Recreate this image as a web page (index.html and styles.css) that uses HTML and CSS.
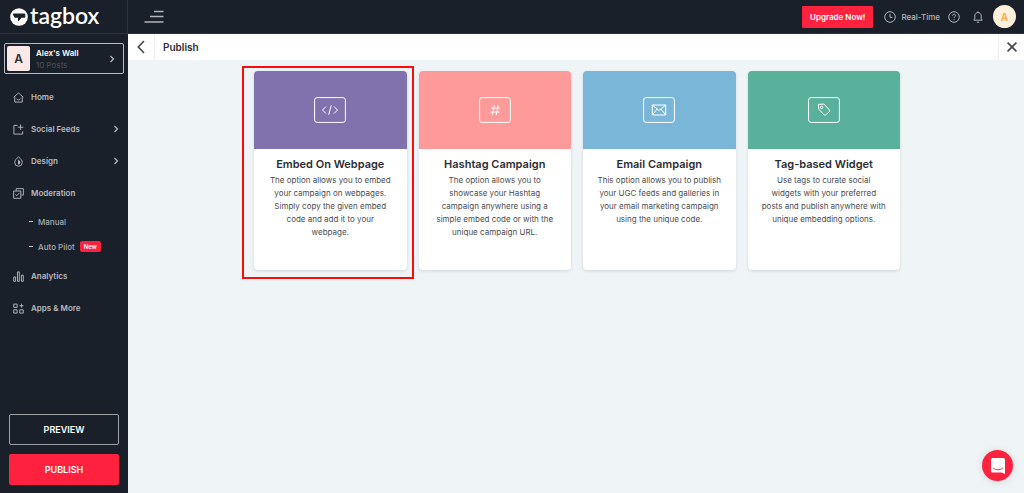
FILE: index.html
```html
<!DOCTYPE html>
<html lang="en">
<head>
<meta charset="utf-8">
<meta name="viewport" content="width=device-width, initial-scale=1">
<title>Publish - tagbox</title>
<link rel="stylesheet" href="styles.css">
</head>
<body>
<div class="app">
  <aside class="sidebar">
    <a class="logo" href="#">
      <svg class="logo-mark" viewBox="0 0 18 18"><circle cx="9" cy="9" r="8.8" fill="#fff"/><path d="M3.200 6h11.600v3.200H11.400l-2.900 3.600V9.200H4.800z" fill="#19202a" stroke="#19202a" stroke-width="1" stroke-linejoin="round"/></svg>
      <span class="logo-text">tagbox</span>
    </a>
    <button class="wall" type="button">
      <span class="wall-badge">A</span>
      <span class="wall-info"><span class="wall-name">Alex's Wall</span><span class="wall-posts">10 Posts</span></span>
      <svg class="chevron" viewBox="0 0 6 8"><path d="M1.500 1 4.500 4 1.500 7"/></svg>
    </button>
    <nav class="menu">
      <a class="menu-item" href="#">
        <svg class="menu-icon" viewBox="0 0 12 12"><path d="M.7 5.700 6 1l5.300 4.700M1.900 4.800v6.200h8.200V4.800M3.800 7.200c1 1.900 3.400 1.900 4.400 0"/></svg>
        <span>Home</span>
      </a>
      <a class="menu-item" href="#">
        <svg class="menu-icon" viewBox="0 0 12 12"><path d="M5 1.500H1v9.500h9.500V8M8.300.5v6M5.300 3.500h6"/></svg>
        <span>Social Feeds</span>
        <svg class="chevron" viewBox="0 0 6 8"><path d="M1.500 1 4.500 4 1.500 7"/></svg>
      </a>
      <a class="menu-item" href="#">
        <svg class="menu-icon" viewBox="0 0 12 12"><path d="M6 .8C3.600 3 1.900 4.800 1.900 7.100a4.100 4.100 0 0 0 8.200 0C10.100 4.800 8.400 3 6 .8z"/><path d="M6 4.500v4.500C8 8.600 8 5.500 6 4.500z" fill="currentColor"/></svg>
        <span>Design</span>
        <svg class="chevron" viewBox="0 0 6 8"><path d="M1.500 1 4.500 4 1.500 7"/></svg>
      </a>
      <a class="menu-item" href="#">
        <svg class="menu-icon" viewBox="0 0 12 12"><path d="M3.500 3V.7h7.800v7H9M.7 3.300h7.800v7.900H.7zM2.700 7l1.400 1.500L7 5.300"/></svg>
        <span>Moderation</span>
      </a>
      <div class="submenu">
        <a class="sub-item" href="#"><span class="dash"></span><span>Manual</span></a>
        <a class="sub-item" href="#"><span class="dash"></span><span>Auto Pilot</span><span class="new">New</span></a>
      </div>
      <a class="menu-item" href="#">
        <svg class="menu-icon" viewBox="0 0 12 12"><path d="M.8 6.500h2v4.700h-2zM4.900 1h2v10.200h-2zM9.200 4.500h2v6.700h-2z"/></svg>
        <span>Analytics</span>
      </a>
      <a class="menu-item" href="#">
        <svg class="menu-icon" viewBox="0 0 12 12"><path d="M.8 1.200h3.700v3.600H.8zM.8 7.400h3.700V11H.8zM7.400 7.400h3.800V11H7.400zM9.300.8v4.400M7.100 3h4.400"/></svg>
        <span>Apps &amp; More</span>
      </a>
    </nav>
    <div class="actions">
      <button class="action preview" type="button">PREVIEW</button>
      <button class="action publish" type="button">PUBLISH</button>
    </div>
  </aside>
  <div class="page">
    <header class="topbar">
      <button class="icon-btn toggle" type="button" aria-label="Toggle menu">
        <svg width="20" height="14" viewBox="0 0 20 14"><path d="M10 1.500h9.500M6 6.500h13.500M.5 12h19" stroke-width="1.600"/></svg>
      </button>
      <button class="upgrade" type="button">Upgrade Now!</button>
      <button class="icon-btn realtime" type="button">
        <svg width="12" height="12" viewBox="0 0 12 12"><circle cx="6" cy="6" r="5.300"/><path d="M6 3v3.400h2.400"/></svg>
        <span>Real-Time</span>
      </button>
      <button class="icon-btn help" type="button" aria-label="Help">
        <svg width="12" height="12" viewBox="0 0 12 12"><circle cx="6" cy="6" r="5.300"/><path d="M4.500 4.700c0-2 3.100-2 3.100-.1C7.600 5.700 6 5.700 6 7.100M6 8.200v1"/></svg>
      </button>
      <button class="icon-btn bell" type="button" aria-label="Notifications">
        <svg width="10" height="12" viewBox="0 0 10 12"><path d="M5 .3v1.200M.8 9.200h8.400L8.200 7.700V5c0-4.600-6.400-4.600-6.400 0v2.700zM3.800 11.200h2.400"/></svg>
      </button>
      <button class="avatar" type="button">A</button>
    </header>
    <div class="titlebar">
      <button class="bar-btn back" type="button" aria-label="Back"><svg width="8" height="14" viewBox="0 0 8 14"><path d="M7 1 1.300 7 7 13"/></svg></button>
      <h1 class="title">Publish</h1>
      <button class="bar-btn close" type="button" aria-label="Close"><svg width="10" height="10" viewBox="0 0 10 10"><path d="m.6.600 8.800 8.800M9.400.600.600 9.400"/></svg></button>
    </div>
    <main class="content">
      <div class="cards">
        <article class="card selected">
          <div class="banner purple"><svg width="32" height="26" viewBox="0 0 32 26"><rect x=".6" y=".6" width="30.800" height="24.800" rx="2.500"/><path d="M12 9.500 8.500 13l3.500 3.500M20 9.500l3.500 3.500-3.500 3.500M17.300 8.300l-2.600 9.400"/></svg></div>
          <h2 class="card-title">Embed On Webpage</h2>
          <p class="card-text">The option allows you to embed your campaign on webpages. Simply copy the given embed code and add it to your<br>webpage.</p>
        </article>
        <article class="card">
          <div class="banner pink"><svg width="32" height="26" viewBox="0 0 32 26"><rect x=".6" y=".6" width="30.800" height="24.800" rx="2.500"/><path d="m15.300 8-2 10M19.200 8l-2 10M12 11h9M11.400 15h9"/></svg></div>
          <h2 class="card-title">Hashtag Campaign</h2>
          <p class="card-text">The option allows you to showcase your Hashtag campaign anywhere using a simple embed code or with the unique campaign URL.</p>
        </article>
        <article class="card">
          <div class="banner blue"><svg width="32" height="26" viewBox="0 0 32 26"><rect x=".6" y=".6" width="30.800" height="24.800" rx="2.500"/><path d="M9.300 8h13.400v10H9.300zM9.300 8l6.700 5.500L22.700 8M9.300 18l4.800-6M22.700 18l-4.800-6"/></svg></div>
          <h2 class="card-title">Email Campaign</h2>
          <p class="card-text">This option allows you to publish your UGC feeds and galleries in your email marketing campaign using the unique code.</p>
        </article>
        <article class="card">
          <div class="banner green"><svg width="32" height="26" viewBox="0 0 32 26"><rect x=".6" y=".6" width="30.800" height="24.800" rx="2.500"/><path d="M10.400 7.400 16 7l5.500 6.200c.4.500.4.900 0 1.300l-4 3.500c-.5.400-.9.400-1.300 0l-5.400-5.800z"/><circle cx="13.600" cy="10.400" r="1.200"/></svg></div>
          <h2 class="card-title">Tag-based Widget</h2>
          <p class="card-text">Use tags to curate social<br>widgets with your preferred<br>posts and publish anywhere with unique embedding options.</p>
        </article>
      </div>
    </main>
  </div>
</div>
<button class="chat" type="button" aria-label="Open chat"><svg width="14" height="16" viewBox="0 0 14 16"><path d="M1.500 0h11A1.500 1.500 0 0 1 14 1.500V16l-3.500-1.500h-9A1.500 1.500 0 0 1 0 13V1.500A1.500 1.500 0 0 1 1.500 0z" fill="#fff"/><path d="M2.500 10.300c2.500 2 6.500 2 9 0" fill="none" stroke="#ff223e" stroke-linecap="round"/></svg></button>
</body>
</html>
```
FILE: styles.css
```css
* { box-sizing: border-box; }

body {
  margin: 0;
  font-family: Inter, "Liberation Sans", sans-serif;
  font-size: 8px;
  color: #2b2d33;
}

button {
  margin: 0;
  padding: 0;
  border: 0;
  background: none;
  font: inherit;
  color: inherit;
  cursor: pointer;
}

a { color: inherit; text-decoration: none; }

svg { display: block; flex: none; fill: none; stroke: currentColor; }
.logo-mark, .chat svg { stroke: none; }

.app {
  display: grid;
  grid-template-columns: 128px 1fr;
  min-height: 100vh;
}

/* Sidebar */
.sidebar {
  display: flex;
  flex-direction: column;
  background: #19202a;
  color: #b9bbbf;
}

.logo {
  display: flex;
  align-items: center;
  gap: 2px;
  height: 34px;
  padding-left: 10px;
  border-bottom: 1px solid #2c333c;
  border-right: 1px solid #2c333c;
}

.logo-mark { width: 18px; height: 18px; }

.logo-text {
  padding-bottom: 4px;
  font: 600 23px/28px Lato, sans-serif;
  color: #fff;
}

.wall {
  display: flex;
  align-items: center;
  gap: 6px;
  height: 31px;
  margin: 9px 4px 0;
  padding: 0 8px 0 2px;
  border: 1px solid #b9bcc0;
  border-radius: 2px;
  text-align: left;
}

.wall-badge {
  width: 23px;
  border-radius: 2px;
  background: #fde8e8;
  color: #2b2d33;
  font-size: 12px;
  font-weight: 600;
  line-height: 25px;
  text-align: center;
}

.wall-info { display: flex; flex: 1; flex-direction: column; line-height: 12px; }
.wall-name { color: #fff; font-weight: 600; }
.wall-posts { color: #50505a; }

.chevron { width: 6px; height: 8px; stroke-width: 1.2; }

.menu {
  display: flex;
  flex-direction: column;
  padding-top: 7px;
}

.menu-item {
  display: flex;
  align-items: center;
  gap: 7px;
  height: 32px;
  padding: 0 9px 0 13px;
  font-weight: 600;
}

.menu-item .chevron { margin-left: auto; }
.menu-icon { width: 11px; height: 11px; stroke-width: 1; }

.submenu { padding-bottom: 1px; }

.sub-item {
  display: flex;
  align-items: center;
  gap: 5px;
  height: 25px;
  padding-left: 29px;
  font-weight: 500;
  color: #a9acb1;
}

.dash { width: 4px; height: 1px; background: #c5c7ca; }

.new {
  padding: 0 4px;
  border-radius: 2px;
  background: #ff223e;
  color: #fff;
  font-size: 6px;
  font-weight: 600;
  line-height: 11px;
}

.actions {
  display: flex;
  flex-direction: column;
  gap: 9px;
  margin-top: auto;
  padding: 0 9px 8px;
}

.action {
  height: 31px;
  border-radius: 2px;
  color: #fff;
  font-size: 9px;
  font-weight: 600;
}

.preview { border: 1px solid #9da0a5; }
.publish { background: #ff223e; }

/* Main column */
.page {
  display: flex;
  flex-direction: column;
  min-width: 0;
  background: #eff4f7;
}

.topbar {
  display: flex;
  align-items: center;
  height: 34px;
  padding: 0 8px 0 16px;
  background: #19202a;
  border-bottom: 1px solid #2c333c;
  color: #b3b5b9;
}

.toggle { margin-right: auto; }
.icon-btn { display: flex; align-items: center; }

.upgrade {
  height: 22px;
  padding: 0 8px;
  border-radius: 1px;
  background: #ff223e;
  color: #fff;
  font-weight: 600;
}

.realtime {
  gap: 5px;
  margin-left: 11px;
  font-weight: 500;
}

.help { margin-left: 8px; }
.bell { margin: 0 10px 0 13px; }

.avatar {
  width: 23px;
  height: 23px;
  border-radius: 50%;
  background: #fff0dc;
  color: #f9ad4e;
  font-size: 10px;
  font-weight: 700;
}

.titlebar {
  display: flex;
  height: 26px;
  background: #fff;
}

.bar-btn {
  display: flex;
  align-items: center;
  justify-content: center;
  width: 26px;
  color: #44464b;
}

.bar-btn svg { stroke-width: 1.6; }
.back { width: 27px; border-right: 1px solid #eef0f2; }
.close { margin-left: auto; border-left: 1px solid #eef0f2; }

.title {
  margin: 0;
  padding-left: 8px;
  font-size: 10px;
  font-weight: 600;
  line-height: 26px;
}

.content { padding: 11px 11px 11px 13px; }

.cards {
  display: grid;
  grid-template-columns: repeat(4, 1fr);
  gap: 12px;
  max-width: 646px;
  margin: 0 auto;
}

.card {
  position: relative;
  min-height: 199px;
  border-radius: 4px;
  background: #fff;
  box-shadow: 0 1px 3px rgba(30, 50, 70, 0.15);
  text-align: center;
}

.selected::after {
  content: "";
  position: absolute;
  inset: -5px -7px -9px -12px;
  border: 2px solid #f80d0d;
}

.banner {
  display: flex;
  align-items: center;
  justify-content: center;
  height: 78px;
  border-radius: 4px 4px 0 0;
  color: #fff;
}

.purple { background: #8172ae; }
.pink { background: #ff9a9b; }
.blue { background: #79b6d7; }
.green { background: #59b09b; }

.card-title {
  margin: 7px 0 2px;
  font-size: 11px;
  font-weight: 600;
  line-height: 16px;
}

.card-text {
  margin: 0;
  padding: 0 12px;
  color: #4b4d52;
  line-height: 13px;
}

.chat {
  position: fixed;
  right: 11px;
  bottom: 12px;
  display: flex;
  align-items: center;
  justify-content: center;
  width: 31px;
  height: 31px;
  border-radius: 50%;
  background: #ff223e;
  box-shadow: 0 1px 8px rgba(0, 0, 0, 0.12);
}
```
